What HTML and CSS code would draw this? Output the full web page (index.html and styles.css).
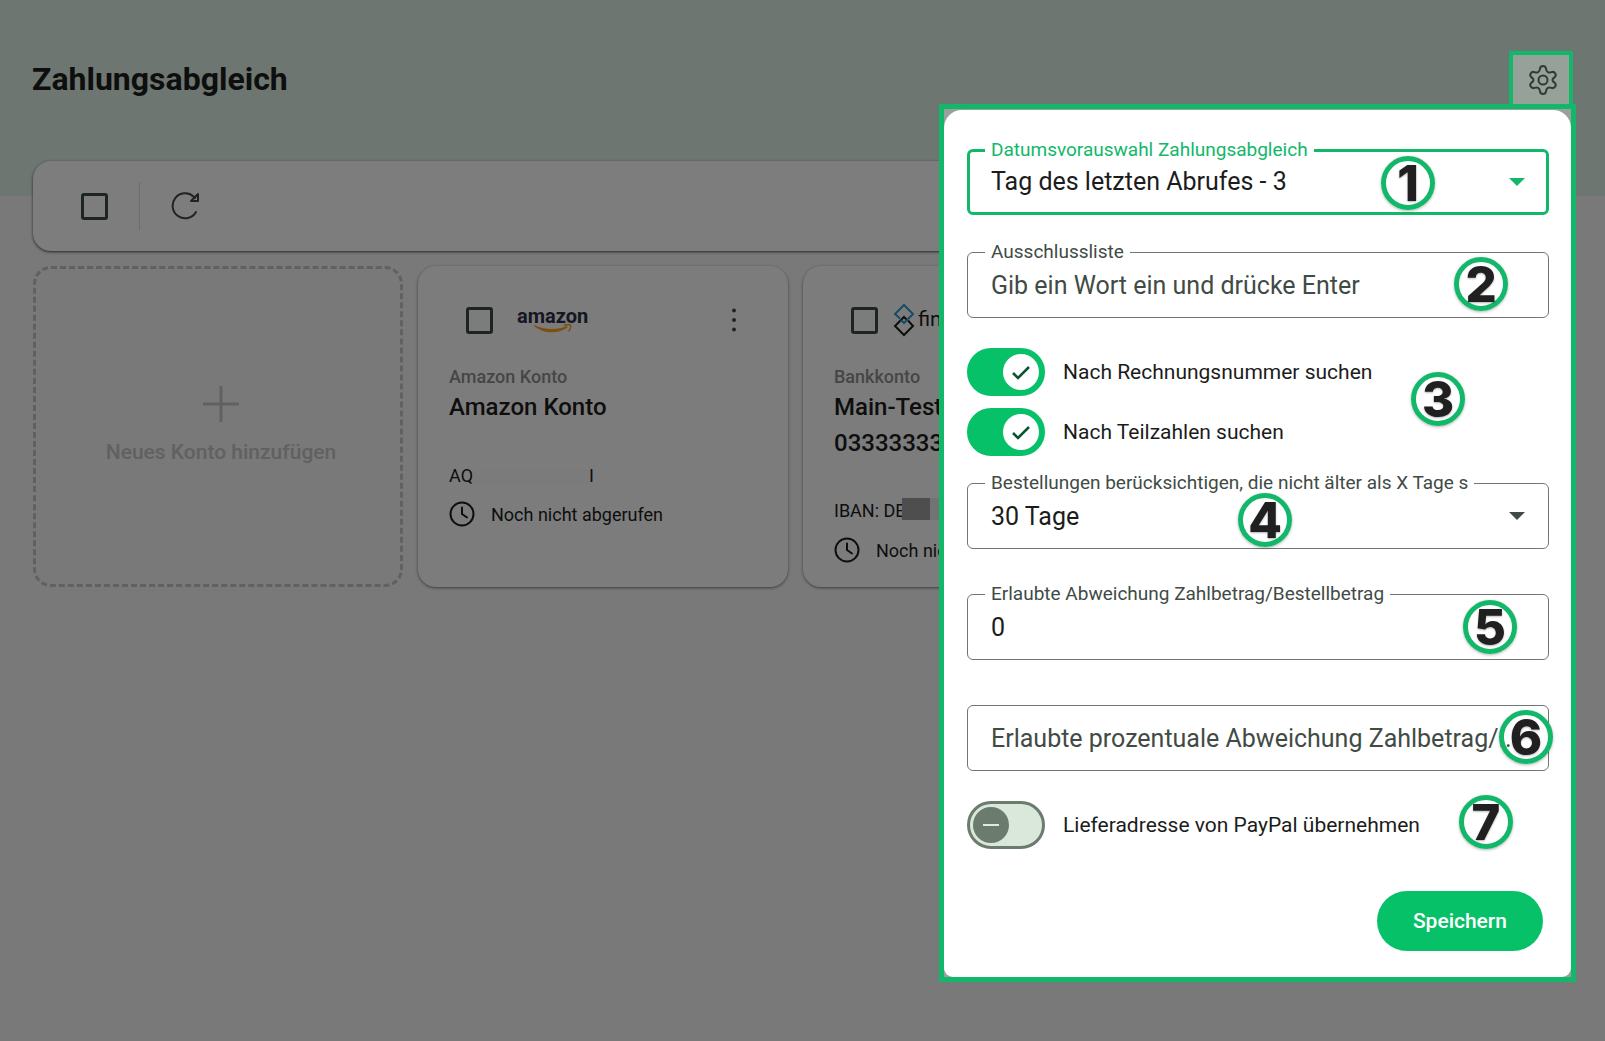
FILE: index.html
```html
<!DOCTYPE html>
<html lang="de">
<head>
  <meta charset="UTF-8">
  <title>Zahlungsabgleich</title>
  <link rel="stylesheet" href="styles.css">
</head>
<body>

  <header class="page-header">
    <h1>Zahlungsabgleich</h1>
  </header>

  <main class="content">
    <div class="toolbar">
      <input type="checkbox" class="box" aria-label="Alle auswählen">
      <span class="divider"></span>
      <button type="button" class="icon-btn" aria-label="Aktualisieren">
        <svg width="30" height="30" viewBox="0 0 30 30" fill="none" stroke="currentColor" stroke-width="2" stroke-linecap="round" stroke-linejoin="round">
          <path d="M25 21A12.500 12.500 0 1 1 22.500 5.500L24 7"/>
          <path d="M27 3v7h-7z"/>
        </svg>
      </button>
    </div>

    <div class="cards">
      <button type="button" class="card-new">
        <svg width="36" height="36" viewBox="0 0 36 36" stroke="currentColor" stroke-width="3">
          <path d="M18 0v36M0 18h36"/>
        </svg>
        <span>Neues Konto hinzufügen</span>
      </button>

      <article class="card">
        <div class="card-top">
          <input type="checkbox" class="box" aria-label="Amazon Konto auswählen">
          <div class="logo-amazon">
            <span>amazon</span>
            <svg width="38" height="9" viewBox="0 0 38 9">
              <path d="M0 1C10 6 24 6 33 2l1 1C25 10.500 9 10 0 2z" fill="#ff9e1b"/>
              <path d="M30 1.500c3-1 6-1 6.500 0s0 4-2 6" fill="none" stroke="#ff9e1b" stroke-width="1.500"/>
            </svg>
          </div>
          <button type="button" class="icon-btn more" aria-label="Mehr">
            <svg width="6" height="24" viewBox="0 0 6 24" fill="currentColor">
              <circle cx="3" cy="2.500" r="2"/><circle cx="3" cy="12" r="2"/><circle cx="3" cy="21.500" r="2"/>
            </svg>
          </button>
        </div>
        <p class="card-type">Amazon Konto</p>
        <h2>Amazon Konto</h2>
        <p class="card-id">AQ<span class="mask-light"></span>I</p>
        <p class="card-status">
          <svg width="26" height="26" viewBox="0 0 26 26" fill="none" stroke="currentColor" stroke-width="2" stroke-linecap="round">
            <circle cx="13" cy="13" r="11.500"/><path d="M13 6.500V13l5 3.500"/>
          </svg>
          Noch nicht abgerufen
        </p>
      </article>

      <article class="card">
        <div class="card-top card-top-bank">
          <input type="checkbox" class="box" aria-label="Bankkonto auswählen">
          <div class="logo-bank">
            <svg width="22" height="34" viewBox="0 0 22 34" fill="none" stroke-width="2">
              <path d="M15 17.500L20 23l-9 9-9-9 9-9 3 3" stroke="#1c1c1c"/>
              <path d="M7 15.500L2 11l9-9 9 9-9 9-3-3" stroke="#2b9cc4"/>
            </svg>
            <span>finAPI</span>
          </div>
        </div>
        <p class="card-type">Bankkonto</p>
        <h2>Main-Test<br>0333333333</h2>
        <p class="card-id">IBAN: DE<span class="mask-dark"></span></p>
        <p class="card-status">
          <svg width="26" height="26" viewBox="0 0 26 26" fill="none" stroke="currentColor" stroke-width="2" stroke-linecap="round">
            <circle cx="13" cy="13" r="11.500"/><path d="M13 6.500V13l5 3.500"/>
          </svg>
          Noch nicht abgerufen
        </p>
      </article>
    </div>
  </main>

  <div class="backdrop"></div>

  <button type="button" class="settings-btn" aria-label="Einstellungen">
    <svg width="30" height="32" viewBox="0 0 30 32" fill="none" stroke="currentColor" stroke-width="2" stroke-linejoin="round">
      <path d="M12 4.500Q12.500 2 15 2t3 2.500q.2 2.700 1.800 3.600t3.600 0q2.600-.8 3.900 1.400t-.9 4q-1.900 1-1.900 2.500t1.900 2.500q2.200 1.800.9 4t-3.900 1.400q-2-.9-3.600 0T18 27.500Q17.500 30 15 30t-3-2.500q-.2-2.700-1.800-3.600t-3.600 0q-2.600.8-3.900-1.400t.9-4q1.900-1 1.900-2.500t-1.900-2.500q-2.200-1.800-.9-4t3.900-1.400q2 .9 3.600 0T12 4.500z"/>
      <circle cx="15" cy="16" r="4.500"/>
    </svg>
  </button>

  <div class="menu">
    <form class="menu-panel">
      <fieldset class="field field-active">
        <legend><label for="dateRange">Datumsvorauswahl Zahlungsabgleich</label></legend>
        <div class="field-body">
          <select id="dateRange">
            <option>Tag des letzten Abrufes - 3</option>
          </select>
          <svg width="16" height="8" viewBox="0 0 16 8" fill="currentColor"><path d="M0 0h16L8 8z"/></svg>
        </div>
      </fieldset>

      <fieldset class="field">
        <legend><label for="exclude">Ausschlussliste</label></legend>
        <div class="field-body">
          <input type="text" id="exclude" placeholder="Gib ein Wort ein und drücke Enter">
        </div>
      </fieldset>

      <div class="toggles">
        <label class="toggle">
          <span class="switch">
            <input type="checkbox" checked>
            <svg class="thumb" width="36" height="36" viewBox="0 0 36 36" fill="none">
              <circle cx="18" cy="18" r="18" fill="#fff"/>
              <path d="M10 19l5 5L26 13" stroke="#0b5230" stroke-width="2.500"/>
            </svg>
          </span>
          Nach Rechnungsnummer suchen
        </label>
        <label class="toggle">
          <span class="switch">
            <input type="checkbox" checked>
            <svg class="thumb" width="36" height="36" viewBox="0 0 36 36" fill="none">
              <circle cx="18" cy="18" r="18" fill="#fff"/>
              <path d="M10 19l5 5L26 13" stroke="#0b5230" stroke-width="2.500"/>
            </svg>
          </span>
          Nach Teilzahlen suchen
        </label>
      </div>

      <fieldset class="field">
        <legend><label for="maxAge">Bestellungen berücksichtigen, die nicht älter als X Tage s</label></legend>
        <div class="field-body">
          <select id="maxAge">
            <option>30 Tage</option>
          </select>
          <svg width="16" height="8" viewBox="0 0 16 8" fill="currentColor"><path d="M0 0h16L8 8z"/></svg>
        </div>
      </fieldset>

      <fieldset class="field">
        <legend><label for="deviation">Erlaubte Abweichung Zahlbetrag/Bestellbetrag</label></legend>
        <div class="field-body">
          <input type="text" id="deviation" value="0">
        </div>
      </fieldset>

      <div class="field field-plain">
        <div class="field-body">
          <input type="text" id="percent" aria-label="Erlaubte prozentuale Abweichung" placeholder="Erlaubte prozentuale Abweichung Zahlbetrag/...">
        </div>
      </div>

      <label class="toggle">
        <span class="switch">
          <input type="checkbox">
          <svg class="thumb" width="36" height="36" viewBox="0 0 36 36" fill="none">
            <circle cx="18" cy="18" r="18" fill="#6b7b6e"/>
            <path d="M10 18h16" stroke="#dcebdd" stroke-width="2"/>
          </svg>
        </span>
        Lieferadresse von PayPal übernehmen
      </label>

      <div class="actions">
        <button type="submit" class="save-btn">Speichern</button>
      </div>

      <span class="badge badge-1">1</span>
      <span class="badge badge-2">2</span>
      <span class="badge badge-3">3</span>
      <span class="badge badge-4">4</span>
      <span class="badge badge-5">5</span>
      <span class="badge badge-6">6</span>
      <span class="badge badge-7">7</span>
    </form>
  </div>

</body>
</html>
```
FILE: styles.css
```css
* {
  box-sizing: border-box;
}

body {
  margin: 0;
  min-height: 100vh;
  font-family: Roboto, sans-serif;
  font-size: 18px;
  color: #1c1c1c;
  background-color: #f2f2f2;
}

button {
  font-family: inherit;
  cursor: pointer;
}

.page-header {
  height: 196px;
  padding: 59px 32px 0;
  background-color: #daece2;
}

h1 {
  margin: 0;
  font-size: 32px;
  line-height: 40px;
  font-weight: bold;
}

h2 {
  margin: 0;
  font-size: 24px;
  line-height: 36px;
  font-weight: 500;
}

p {
  margin: 0;
}

.content {
  margin-top: -35px;
  padding: 0 33px;
}

.toolbar {
  display: flex;
  align-items: center;
  height: 90px;
  padding: 0 48px;
  border-radius: 18px;
  background-color: #fafafa;
  box-shadow: 0 1px 3px rgba(0, 0, 0, 0.7);
}

.divider {
  width: 1px;
  height: 48px;
  margin: 0 31px;
  background-color: #d8d8d8;
}

.box {
  appearance: none;
  width: 27px;
  height: 27px;
  margin: 0;
  border: 3px solid #3b4a41;
  border-radius: 3px;
}

.icon-btn {
  display: flex;
  padding: 0;
  border: 0;
  background: none;
  color: #3f4843;
}

.cards {
  display: grid;
  grid-template-columns: repeat(auto-fill, 370px);
  grid-auto-rows: 321px;
  gap: 15px;
  margin-top: 15px;
}

.card-new {
  display: flex;
  flex-direction: column;
  align-items: center;
  justify-content: center;
  gap: 18px;
  padding: 0 0 4px 6px;
  border: 3px dashed #c2c2c2;
  border-radius: 18px;
  background: none;
  color: #c2c2c2;
  font-size: 21px;
  line-height: 24px;
  font-weight: 500;
}

.card {
  display: flex;
  flex-direction: column;
  padding: 30px 31px;
  border-radius: 18px;
  background-color: #f9f9f9;
  box-shadow: 0 1px 3px rgba(0, 0, 0, 0.5);
}

.card-top {
  display: flex;
  align-items: center;
  gap: 24px;
  height: 48px;
  margin-bottom: 21px;
  padding: 0 20px 0 17px;
}

.card-top-bank {
  gap: 15px;
}

.more {
  margin-left: auto;
}

.logo-amazon {
  display: flex;
  flex-direction: column;
  align-items: center;
  font-size: 20px;
  line-height: 16px;
  font-weight: bold;
  color: #2a2f45;
}

.logo-bank {
  display: flex;
  align-items: center;
  gap: 3px;
  font-family: Lato, sans-serif;
  font-size: 21px;
  line-height: 30px;
}

.logo-bank span {
  padding-bottom: 4px;
}

.card-type {
  line-height: 24px;
  font-weight: 500;
  color: #8c8c8c;
}

.card-id {
  display: flex;
  align-items: center;
  margin-top: auto;
  line-height: 24px;
}

.mask-light {
  width: 116px;
  height: 15px;
  background-color: #f6f6f6;
}

.mask-dark {
  width: 38px;
  height: 22px;
  margin: 0 0 4px -4px;
  background: linear-gradient(to right, #9c9c9c 28px, #e6e6e6 28px);
}

.card-status {
  display: flex;
  align-items: center;
  gap: 16px;
  height: 26px;
  margin: 13px 0 30px;
}

.card + .card .card-status {
  margin-bottom: -6px;
}

.backdrop {
  position: fixed;
  inset: 0;
  background-color: rgba(0, 0, 0, 0.5);
}

.settings-btn {
  position: absolute;
  top: 51px;
  right: 32px;
  display: flex;
  align-items: center;
  justify-content: center;
  width: 64px;
  height: 57px;
  padding: 0 0 0 4px;
  border: 4px solid #12b76a;
  background-color: #95a199;
  color: #2f3d35;
}

/* settings menu */

.menu {
  position: absolute;
  top: 104px;
  right: 29px;
  width: 637px;
  padding-top: 1px;
  border: 5px solid #12b76a;
  background-color: #98a19c;
}

.menu-panel {
  position: relative;
  padding: 30px 22px 26px 23px;
  border-radius: 18px 18px 9px 9px;
  background-color: #fff;
}

.field {
  min-width: 0;
  margin: 0 0 35px;
  padding: 0 17px 9px;
  border: 1px solid #6f7772;
  border-radius: 6px;
  color: #414b45;
}

.field + .field {
  margin-bottom: 30px;
}

.field legend {
  max-width: calc(100% - 30px);
  padding: 0 6px;
  font-size: 19px;
  line-height: 20px;
}

.field legend label {
  white-space: nowrap;
}

.field-body {
  display: flex;
  align-items: center;
  height: 46px;
  padding: 0 6px;
}

.field-body input,
.field-body select {
  appearance: none;
  flex: 1;
  min-width: 0;
  height: 36px;
  padding: 0;
  border: 0;
  outline: 0;
  background: none;
  font-family: inherit;
  font-size: 25px;
  color: #1c1c1c;
}

.field-body input::placeholder {
  color: #414b45;
  opacity: 1;
}

.field-active {
  margin-bottom: 27px;
  border: 3px solid #12b76a;
  padding: 0 15px 9px;
  color: #12b76a;
}

.field-active .field-body {
  height: 43px;
}

.field-plain {
  margin-top: 45px;
  padding: 9px 17px;
}

.toggles {
  display: flex;
  flex-direction: column;
  gap: 12px;
  margin-bottom: 17px;
}

.toggle {
  display: flex;
  align-items: center;
  gap: 18px;
  font-size: 21px;
}

.switch {
  position: relative;
  display: flex;
}

.switch input {
  appearance: none;
  width: 78px;
  height: 48px;
  margin: 0;
  border: 3px solid #6b7b6e;
  border-radius: 24px;
  background-color: #d9e8db;
}

.switch input:checked {
  border-color: #06c167;
  background-color: #06c167;
}

.thumb {
  position: absolute;
  top: 6px;
  left: 6px;
  pointer-events: none;
}

.switch input:checked + .thumb {
  left: 36px;
}

.actions {
  display: flex;
  justify-content: flex-end;
  margin-top: 42px;
  padding-right: 6px;
}

.save-btn {
  height: 60px;
  padding: 0 36px;
  border: 0;
  border-radius: 30px;
  background-color: #06c167;
  color: #fff;
  font-size: 21px;
  font-weight: 500;
}

/* numbered markers over the settings */

.badge {
  position: absolute;
  display: flex;
  align-items: center;
  justify-content: center;
  width: 54px;
  height: 54px;
  border: 5px solid #12b76a;
  border-radius: 50%;
  box-shadow: 0 1px 3px rgba(0, 0, 0, 0.3);
  font-family: Inter, sans-serif;
  font-size: 49px;
  font-weight: 800;
  color: #202020;
  text-shadow: 0 1px 2px rgba(0, 0, 0, 0.3);
  pointer-events: none;
}

.badge-1 {
  top: 46px;
  right: 136px;
}

.badge-2 {
  top: 147px;
  right: 63px;
}

.badge-3 {
  top: 262px;
  right: 106px;
}

.badge-4 {
  top: 383px;
  right: 279px;
}

.badge-5 {
  top: 490px;
  right: 54px;
}

.badge-6 {
  top: 600px;
  right: 18px;
}

.badge-7 {
  top: 685px;
  right: 58px;
}
```
